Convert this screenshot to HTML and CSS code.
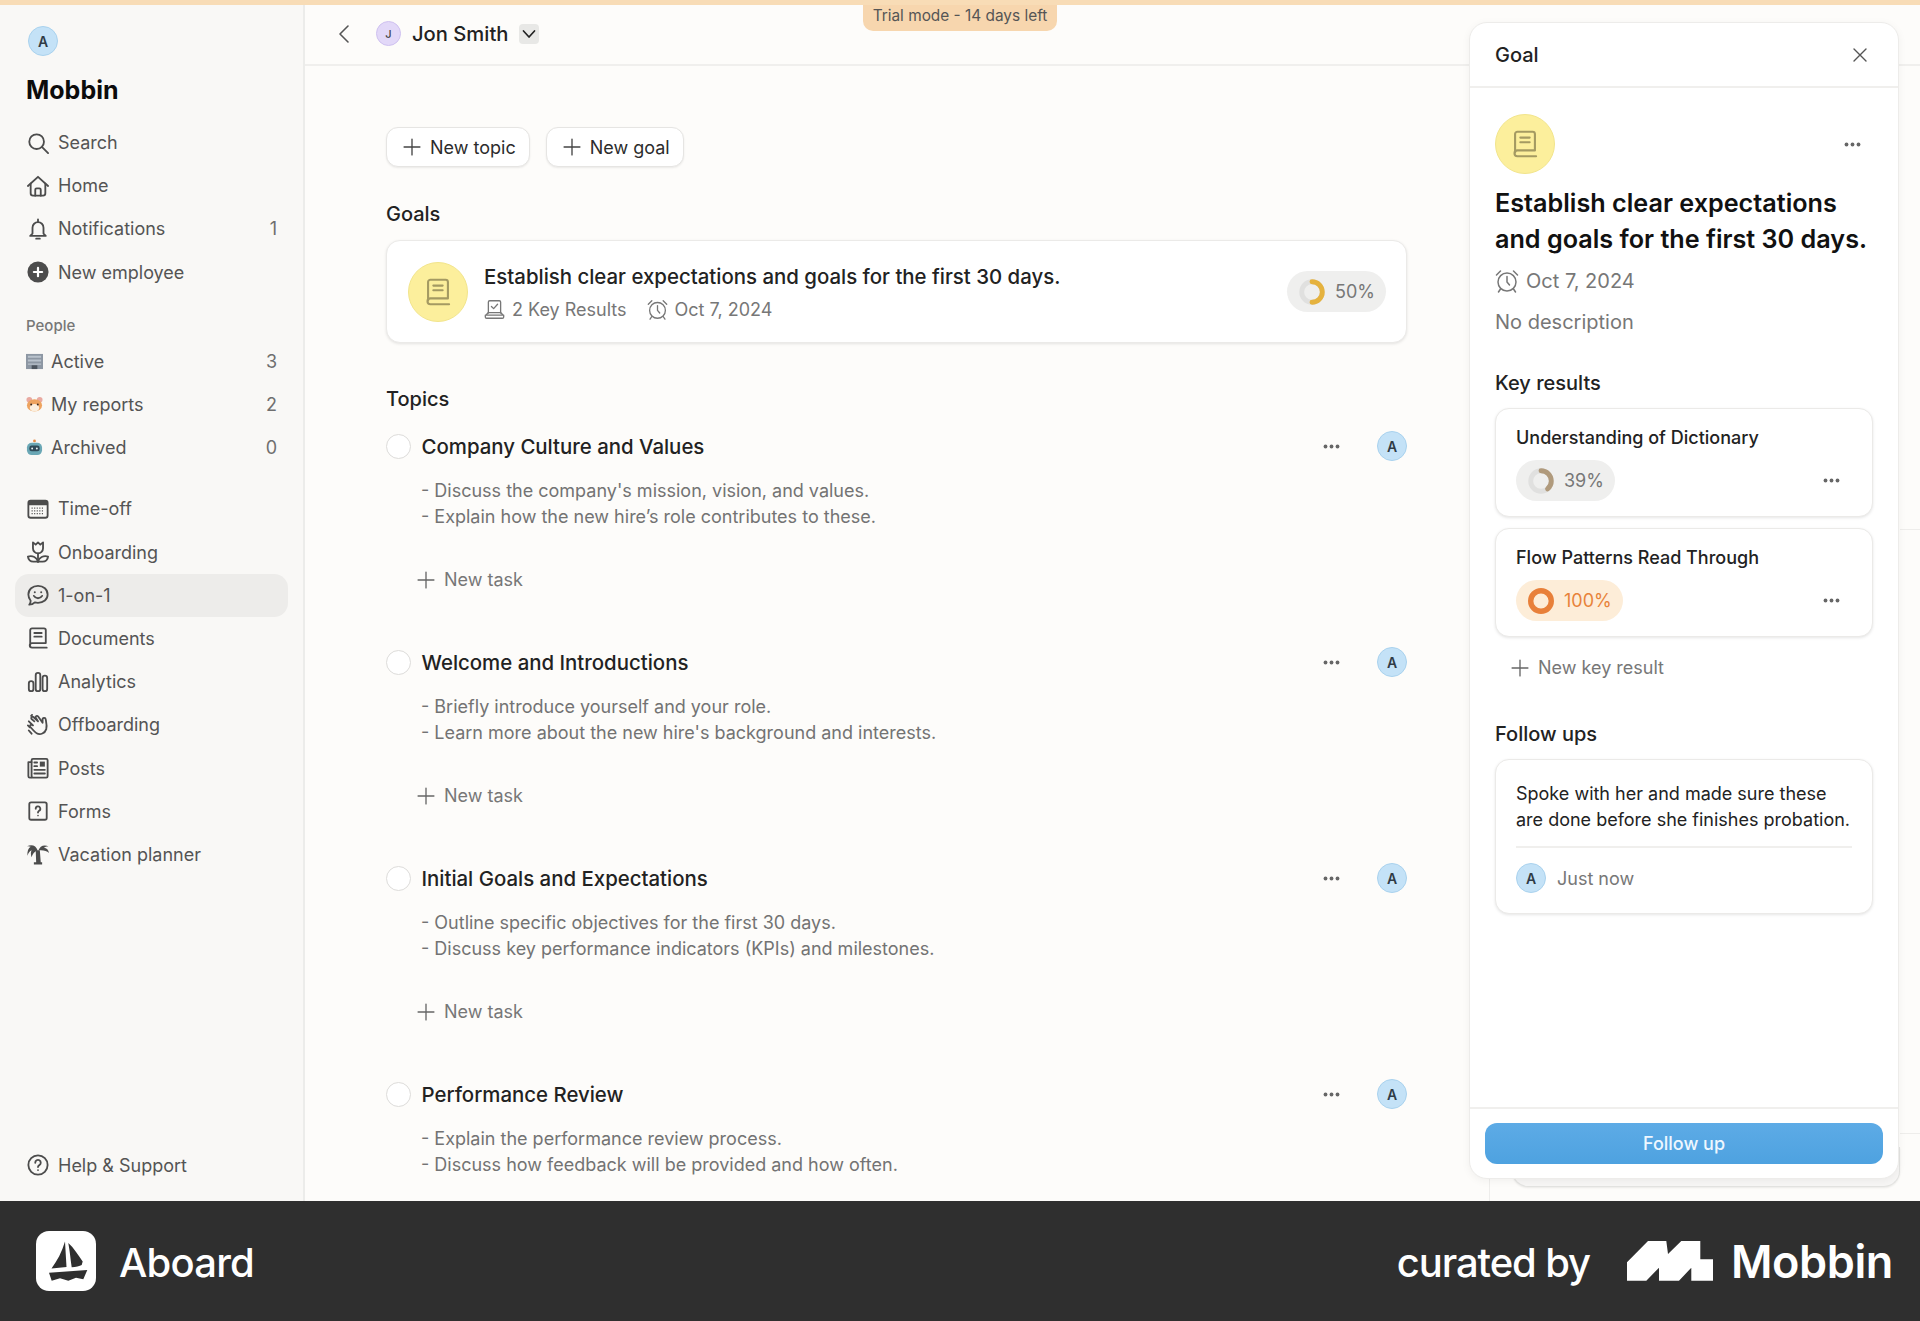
FILE: index.html
```html
<!DOCTYPE html>
<html lang="en">
<head>
<meta charset="utf-8">
<title>Aboard - 1-on-1</title>
<link rel="stylesheet" href="styles.css">
</head>
<body>
<svg class="sprites" xmlns="http://www.w3.org/2000/svg">
  <symbol id="i-search" viewBox="0 0 24 24"><circle cx="10.5" cy="10.5" r="8"/><path d="M16.5 16.5 23 23"/></symbol>
  <symbol id="i-home" viewBox="0 0 24 24"><path d="M1 12 12 2l11 10"/><path d="M4 9.5V20a2.5 2.5 0 0 0 2.5 2.5h11A2.5 2.5 0 0 0 20 20V9.5"/><path d="M9 22.5V16a1.5 1.5 0 0 1 1.5-1.5h3A1.5 1.5 0 0 1 15 16v6.5"/></symbol>
  <symbol id="i-bell" viewBox="0 0 24 24"><path d="M12 1.5V4"/><path d="M6 17v-6.5a6 6 0 0 1 12 0V17l2.5 2.5h-17z"/><path d="M10 22.5h4"/></symbol>
  <symbol id="i-add" viewBox="0 0 24 24"><circle class="fill" cx="12" cy="12" r="11.500"/><path class="inv" d="M12 7.5v9M7.5 12h9"/></symbol>
  <symbol id="i-cal" viewBox="0 0 24 24"><rect x="1.5" y="3" width="21" height="18.5" rx="2.5"/><path class="fill" d="M1.5 5.5A2.5 2.5 0 0 1 4 3h16a2.5 2.5 0 0 1 2.5 2.5V8h-21z"/><path class="thin" stroke-dasharray="1.2 1.6" d="M5 11h14M5 14h14M5 17h14"/></symbol>
  <symbol id="i-tulip" viewBox="0 0 24 24"><path d="M6.5 1.5l3 2.5L12 1.5 14.500 4l3-2.500V8a5.500 5.500 0 0 1-11 0z"/><path d="M12 13.500v9.500"/><path d="M12 22.500H7c-3.500 0-5.500-2-6-5.500 5-1.500 10 1 11 5.500zM12 22.500h5c3.500 0 5.500-2 6-5.500-5-1.500-10 1-11 5.500z"/></symbol>
  <symbol id="i-chat" viewBox="0 0 24 24"><path d="M12 2c6 0 10.500 4 10.500 9.500S18 20.500 12 20.500c-1.500 0-2.500-.2-3.500-.5-1.500 1.500-3.500 2.500-6 2.500 1-1 1.500-2.500 1.500-4.200C2.500 16.500 1.500 14.200 1.500 11.500 1.500 6 6 2 12 2z"/><circle class="fill" cx="8.500" cy="9" r="1.100"/><circle class="fill" cx="15.500" cy="9" r="1.100"/><path d="M7.500 13c1 1.800 2.500 2.500 4.500 2.500s3.500-.7 4.500-2.500"/></symbol>
  <symbol id="i-book" viewBox="0 0 24 24"><path d="M3.500 19.500V3.500a2 2 0 0 1 2-2h13a2 2 0 0 1 2 2V17.500h-15a2.500 2.500 0 0 0 0 5h16"/><path d="M8 6.500h8M8 10.500h8"/></symbol>
  <symbol id="i-bars" viewBox="0 0 24 24"><rect x="2" y="11" width="5" height="11" rx="2.500"/><rect x="9.500" y="2" width="5" height="20" rx="2.500"/><rect x="17" y="5" width="5" height="17" rx="2.500"/></symbol>
  <symbol id="i-wave" viewBox="0 0 24 24"><path d="M8 8 5 5.500a1.500 1.500 0 0 1 2-2.200l5 4.700-2.500-4a1.500 1.500 0 0 1 2.500-1.500l5 7V6a1.700 1.700 0 0 1 3.400-.2c.8 4 1.600 7 .6 10.700-1.400 4.500-6.500 6.800-10.500 4.500-1.500-.8-2.500-2-7-7a1.500 1.500 0 0 1 2.100-2.100"/><path d="M2 8 6.500 12.500M1 12.500l2 2M2 18l3 3.500M4.500 2l1-1"/></symbol>
  <symbol id="i-news" viewBox="0 0 24 24"><path d="M5 22.500H3a1.500 1.500 0 0 1-1.500-1.500V5.500H5"/><rect x="5" y="2" width="17.500" height="20.500" rx="1.500"/><rect class="fill" x="14" y="5" width="5.500" height="5.500"/><path d="M8 6h3M8 10h3M8 14h11.500M8 18h11.500"/></symbol>
  <symbol id="i-form" viewBox="0 0 24 24"><rect x="2.500" y="2.500" width="19" height="19" rx="2"/><path d="M9.500 9.500a2.500 2.500 0 1 1 3.700 2.200c-.8.500-1.200 1-1.200 2"/><circle class="fill" cx="12" cy="17" r=".9"/></symbol>
  <symbol id="i-palm" viewBox="0 0 24 24"><path class="solid" d="M11.500 8C10 3 5.500 1 0 3.500c1.800-.2 3 0 4 .6C1.500 5.500 0 9 .5 14c1-3 2.500-5 4.500-6-1 2-1 4.500 0 7.500C6 12 8 9.500 11.500 8zM12.500 8C14 3.500 18.500 1 24 4c-2.500-.2-4 .2-5.500 1.200C21.500 5.500 23.500 7.500 24 11c-2.500-2.500-6-3.500-11.500-3z"/><path class="solid" d="M9.500 8h4.500l1 13h1.500v2.500H7.500V21h2.500z"/></symbol>
  <symbol id="i-help" viewBox="0 0 24 24"><circle cx="12" cy="12" r="10.500"/><path d="M9 9.500a3 3 0 1 1 4.500 2.600c-1 .6-1.500 1.100-1.500 2.200"/><circle class="fill" cx="12" cy="17.500" r="1"/></symbol>
  <symbol id="i-alarm" viewBox="0 0 24 24"><circle cx="12" cy="13" r="9"/><path d="M12 7.500V13l2.500 3"/><path d="M1.500 6 5.500 2M22.500 6l-4-4M5.500 20 3.500 23M18.500 20l2 3"/></symbol>
  <symbol id="i-tray" viewBox="0 0 24 24"><path d="M5 16V3.500A1.500 1.500 0 0 1 6.500 2h11A1.500 1.500 0 0 1 19 3.500V16"/><path d="M8.500 8.500 11 11l4.500-5"/><path d="M5 15.500 1.500 19v1.500A1.500 1.500 0 0 0 3 22h18a1.500 1.500 0 0 0 1.500-1.500V19L19 15.500zM1.500 18.500h21"/></symbol>
  <symbol id="i-plus" viewBox="0 0 24 24"><path d="M12 2.500v19M2.500 12h19"/></symbol>
  <symbol id="i-dots" viewBox="0 0 17 5"><circle class="fill" cx="2.500" cy="2.500" r="1.900"/><circle class="fill" cx="8.500" cy="2.500" r="1.900"/><circle class="fill" cx="14.500" cy="2.500" r="1.900"/></symbol>
</svg>

<div class="strip"></div>
<div class="app">
  <aside class="sidebar">
    <div class="avatar avatar-blue side-avatar">A</div>
    <div class="workspace">Mobbin</div>
    <nav class="nav">
      <a class="nav-item"><svg class="ic"><use href="#i-search"/></svg>Search</a>
      <a class="nav-item"><svg class="ic"><use href="#i-home"/></svg>Home</a>
      <a class="nav-item"><svg class="ic"><use href="#i-bell"/></svg>Notifications<span class="count">1</span></a>
      <a class="nav-item"><svg class="ic"><use href="#i-add"/></svg>New employee</a>
    </nav>
    <div class="nav-label">People</div>
    <nav class="nav">
      <a class="nav-item nav-emoji">
        <svg class="emoji" viewBox="0 0 18 18"><rect y="1" width="18" height="16" fill="#8d97a3"/><path d="M2 3h14v2H2zM2 7h14v2H2zM2 11h14v1.500H2z" fill="#b9c2cc"/><rect x="6" y="13" width="6" height="4" fill="#4d555e"/></svg>Active<span class="count">3</span></a>
      <a class="nav-item nav-emoji">
        <svg class="emoji" viewBox="0 0 18 18"><circle cx="3.500" cy="4" r="3" fill="#e9a9a0"/><circle cx="14.500" cy="4" r="3" fill="#e9a9a0"/><ellipse cx="9" cy="10" rx="8" ry="6.500" fill="#eea35f"/><ellipse cx="9" cy="12.500" rx="5" ry="4" fill="#fbeedd"/><circle cx="5.500" cy="9" r="1" fill="#3a2b24"/><circle cx="12.500" cy="9" r="1" fill="#3a2b24"/></svg>My reports<span class="count">2</span></a>
      <a class="nav-item nav-emoji">
        <svg class="emoji" viewBox="0 0 18 18"><circle cx="9" cy="2" r="1.500" fill="#e88e4a"/><rect x="1" y="4" width="16" height="13" rx="5" fill="#6aa7b5"/><rect x="3.500" y="7" width="11" height="6" rx="2.500" fill="#2f4a58"/><circle cx="6.500" cy="10" r="1" fill="#e9f3f5"/><circle cx="11.500" cy="10" r="1" fill="#e9f3f5"/></svg>Archived<span class="count">0</span></a>
    </nav>
    <nav class="nav nav-tools">
      <a class="nav-item"><svg class="ic"><use href="#i-cal"/></svg>Time-off</a>
      <a class="nav-item"><svg class="ic"><use href="#i-tulip"/></svg>Onboarding</a>
      <a class="nav-item is-active"><svg class="ic"><use href="#i-chat"/></svg>1-on-1</a>
      <a class="nav-item"><svg class="ic"><use href="#i-book"/></svg>Documents</a>
      <a class="nav-item"><svg class="ic"><use href="#i-bars"/></svg>Analytics</a>
      <a class="nav-item"><svg class="ic"><use href="#i-wave"/></svg>Offboarding</a>
      <a class="nav-item"><svg class="ic"><use href="#i-news"/></svg>Posts</a>
      <a class="nav-item"><svg class="ic"><use href="#i-form"/></svg>Forms</a>
      <a class="nav-item"><svg class="ic"><use href="#i-palm"/></svg>Vacation planner</a>
    </nav>
    <a class="nav-item help"><svg class="ic"><use href="#i-help"/></svg>Help &amp; Support</a>
  </aside>

  <main class="main">
    <header class="topbar">
      <svg class="back" viewBox="0 0 12 20"><path d="M10 2 2 10l8 8"/></svg>
      <div class="avatar avatar-purple">J</div>
      <span class="person">Jon Smith</span>
      <span class="caret"><svg viewBox="0 0 14 10"><path d="M1.500 2 7 8l5.500-6"/></svg></span>
    </header>
    <div class="content">
      <div class="actions">
        <button class="btn"><svg class="ic-plus"><use href="#i-plus"/></svg>New topic</button>
        <button class="btn"><svg class="ic-plus"><use href="#i-plus"/></svg>New goal</button>
      </div>
      <h3 class="section goals-head">Goals</h3>
      <div class="goal-card">
        <div class="goal-icon"><svg class="book-ic"><use href="#i-book"/></svg></div>
        <div class="goal-body">
          <div class="goal-title">Establish clear expectations and goals for the first 30 days.</div>
          <div class="goal-meta">
            <span class="meta-item"><svg class="ic-meta"><use href="#i-tray"/></svg>2 Key Results</span>
            <span class="meta-item"><svg class="ic-meta"><use href="#i-alarm"/></svg>Oct 7, 2024</span>
          </div>
        </div>
        <span class="pill">
          <svg class="ring" viewBox="0 0 24 24"><circle class="track" cx="12" cy="12" r="9.500"/><circle class="arc arc-yellow" cx="12" cy="12" r="9.500" pathLength="100" stroke-dasharray="50 100"/></svg>50%
        </span>
      </div>
      <h3 class="section topics-head">Topics</h3>

      <section class="topic">
        <div class="topic-head"><span class="check"></span><span class="topic-title">Company Culture and Values</span><svg class="dots"><use href="#i-dots"/></svg><div class="avatar avatar-blue">A</div></div>
        <p class="topic-desc">- Discuss the company's mission, vision, and values.<br>- Explain how the new hire’s role contributes to these.</p>
        <div class="new-task"><svg class="ic-plus"><use href="#i-plus"/></svg>New task</div>
      </section>
      <section class="topic">
        <div class="topic-head"><span class="check"></span><span class="topic-title">Welcome and Introductions</span><svg class="dots"><use href="#i-dots"/></svg><div class="avatar avatar-blue">A</div></div>
        <p class="topic-desc">- Briefly introduce yourself and your role.<br>- Learn more about the new hire's background and interests.</p>
        <div class="new-task"><svg class="ic-plus"><use href="#i-plus"/></svg>New task</div>
      </section>
      <section class="topic">
        <div class="topic-head"><span class="check"></span><span class="topic-title">Initial Goals and Expectations</span><svg class="dots"><use href="#i-dots"/></svg><div class="avatar avatar-blue">A</div></div>
        <p class="topic-desc">- Outline specific objectives for the first 30 days.<br>- Discuss key performance indicators (KPIs) and milestones.</p>
        <div class="new-task"><svg class="ic-plus"><use href="#i-plus"/></svg>New task</div>
      </section>
      <section class="topic">
        <div class="topic-head"><span class="check"></span><span class="topic-title">Performance Review</span><svg class="dots"><use href="#i-dots"/></svg><div class="avatar avatar-blue">A</div></div>
        <p class="topic-desc">- Explain the performance review process.<br>- Discuss how feedback will be provided and how often.</p>
      </section>
    </div>
  </main>

  <div class="trial">Trial mode - 14 days left</div>

  <div class="under-panel">
    <div class="under-row under-row-1"></div>
    <div class="under-row under-row-2"></div>
    <div class="under-card"></div>
  </div>

  <aside class="panel">
    <div class="panel-head">
      <span>Goal</span>
      <svg class="close" viewBox="0 0 16 16"><path d="M2 2l12 12M14 2 2 14"/></svg>
    </div>
    <div class="panel-body">
      <div class="panel-top">
        <div class="goal-icon"><svg class="book-ic"><use href="#i-book"/></svg></div>
        <svg class="dots"><use href="#i-dots"/></svg>
      </div>
      <h2 class="panel-title">Establish clear expectations and goals for the first 30 days.</h2>
      <div class="panel-date"><svg class="ic-date"><use href="#i-alarm"/></svg>Oct 7, 2024</div>
      <div class="panel-desc">No description</div>
      <h3 class="section kr-head">Key results</h3>
      <div class="kr-card">
        <div class="kr-title">Understanding of Dictionary</div>
        <div class="kr-row">
          <span class="pill">
            <svg class="ring" viewBox="0 0 24 24"><circle class="track" cx="12" cy="12" r="9.500"/><circle class="arc arc-tan" cx="12" cy="12" r="9.500" pathLength="100" stroke-dasharray="39 100"/></svg>39%
          </span>
          <svg class="dots"><use href="#i-dots"/></svg>
        </div>
      </div>
      <div class="kr-card">
        <div class="kr-title">Flow Patterns Read Through</div>
        <div class="kr-row">
          <span class="pill pill-done">
            <svg class="ring" viewBox="0 0 24 24"><circle class="arc arc-orange" cx="12" cy="12" r="9.500"/></svg>100%
          </span>
          <svg class="dots"><use href="#i-dots"/></svg>
        </div>
      </div>
      <div class="new-kr"><svg class="ic-plus"><use href="#i-plus"/></svg>New key result</div>
      <h3 class="section fu-head">Follow ups</h3>
      <div class="fu-card">
        <p class="fu-text">Spoke with her and made sure these are done before she finishes probation.</p>
        <div class="fu-meta"><div class="avatar avatar-blue">A</div><span>Just now</span></div>
      </div>
    </div>
    <div class="panel-foot"><button class="primary">Follow up</button></div>
  </aside>
</div>

<footer class="brandbar">
  <div class="brand">
    <svg class="boat" viewBox="0 0 60 60"><rect width="60" height="60" rx="13" fill="#fff"/><path fill="#2f2f2f" d="M29 10.500C26 21 21 30 15.500 37.500L30.500 36zM32.300 12c1.500 8 2.200 16 3.400 24.300 4-.4 8-1 10-2.300l1-3.500C42 24 38 17 32.300 12zM13 41.700l38.300-2.700-4 9.300-7.300-1.600-7.700 3-8.300-2.400-8.300 2.400z"/></svg>
    <span>Aboard</span>
  </div>
  <div class="curated">
    <span class="curated-by">curated by</span>
    <svg class="mobbin-mark" viewBox="0 0 86 40"><path fill="#fff" d="M0 39.700V21.300L21 0h18.300L41 13 54.300 0h19v18.300H86v21.400H64.300V26.700L52 39.700H32V26.700L19.300 39.700z"/></svg>
    <span class="mobbin-word">Mobbin</span>
  </div>
</footer>
</body>
</html>
```

FILE: styles.css
```css
* { box-sizing: border-box; }
html, body { margin: 0; padding: 0; }
body {
  width: 1920px;
  height: 1321px;
  overflow: hidden;
  font-family: Inter, "Liberation Sans", sans-serif;
  color: #222;
  background: #fdfcfa;
  display: flex;
  flex-direction: column;
}
.sprites { display: none; }
svg { fill: none; stroke: currentColor; stroke-width: 1.7; stroke-linecap: round; stroke-linejoin: round; flex: none; }
symbol .fill { fill: currentColor; stroke: none; }
symbol .inv { stroke: #fff; stroke-width: 2.4; }
symbol .thin { stroke-width: 1.2; stroke-linecap: butt; }
symbol .solid { fill: currentColor; stroke: none; }

.strip { height: 5px; background: #f8dcb6; flex: none; }
.app { position: relative; flex: none; height: 1196px; display: flex; overflow: hidden; }

/* sidebar */
.sidebar {
  width: 305px;
  flex: none;
  background: #f9f8f6;
  border-right: 2px solid #ececea;
  display: flex;
  flex-direction: column;
  padding: 21px 15px 14px 15px;
}
.avatar {
  width: 30px; height: 30px; border-radius: 50%;
  display: flex; align-items: center; justify-content: center;
  font-size: 14px; font-weight: 600; flex: none;
}
.avatar-blue { background: #c4e2f7; border: 1px solid #a9d2ee; color: #2f3b46; }
.avatar-purple { width: 25px; height: 25px; font-size: 11px; font-weight: 500; background: #e2d8f8; border: 1px solid #cfc1f0; color: #444; }
.side-avatar { margin-left: 13px; }
.workspace { margin: 17px 0 0 11px; font-size: 25px; line-height: 34px; font-weight: 700; color: #0c0c0c; }
.nav { display: flex; flex-direction: column; }
.workspace + .nav { margin-top: 14px; }
.nav-item {
  height: 43.2px;
  display: flex; align-items: center;
  padding: 0 11px 0 12px;
  gap: 9px;
  font-size: 18px;
  color: #545454;
  border-radius: 14px;
}
.ic { width: 22px; height: 22px; color: #4c4c4c; stroke-width: 2; }
.is-active { background: #edecea; }
.nav-label { margin: 21px 0 0 11px; font-size: 15px; line-height: 22px; font-weight: 500; color: #777; }
.nav-label + .nav { margin-top: 3px; }
.nav-emoji { padding-left: 11px; gap: 8px; }
.emoji { width: 17px; height: 17px; stroke: none; }
.count { margin-left: auto; color: #6f6f6f; }
.nav-tools { margin-top: 18px; }
.help { margin-top: auto; }

/* main */
.main { flex: 1; min-width: 0; display: flex; flex-direction: column; }
.topbar {
  height: 61px;
  flex: none;
  display: flex; align-items: center;
  border-bottom: 2px solid #f0efed;
  padding: 0 0 2px 33px;
}
.back { width: 12px; height: 20px; color: #555; stroke-width: 1.6; }
.topbar .avatar { margin-left: 26px; }
.person { margin-left: 11px; font-size: 20.200px; font-weight: 500; color: #222; }
.caret { margin-left: 11px; width: 20px; height: 20px; border-radius: 4px; background: #e8e8e6; display: flex; align-items: center; justify-content: center; }
.caret svg { width: 14px; height: 10px; color: #222; }
.content { padding: 61px 0 0 81px; width: 1102px; }
.actions { display: flex; gap: 16px; }
.btn {
  height: 40px;
  display: flex; align-items: center; gap: 8px;
  padding: 0 13px 0 15px;
  border: 1px solid #e6e5e3;
  border-radius: 12px;
  background: #fff;
  box-shadow: 0 1px 2px rgba(0,0,0,.08);
  font: 400 18px Inter, "Liberation Sans", sans-serif;
  color: #2c2c2c;
}
.ic-plus { width: 20px; height: 20px; color: #444; stroke-width: 1.6; }
.section { margin: 0; font-size: 20px; line-height: 28px; font-weight: 500; color: #222; }
.goals-head { margin-top: 33px; }
.goal-card {
  margin-top: 12px;
  height: 103px;
  display: flex; align-items: center;
  padding: 0 20px 0 21px;
  background: #fff;
  border: 1px solid #ebeae8;
  border-radius: 14px;
  box-shadow: 0 1px 3px rgba(0,0,0,.1);
}
.goal-icon { width: 60px; height: 60px; border-radius: 50%; background: #fcef9c; border: 1px solid #f2e58c; display: flex; align-items: center; justify-content: center; flex: none; }
.book-ic { width: 28px; height: 28px; color: #a49a62; stroke-width: 1.8; }
.goal-body { margin-left: 16px; flex: 1; padding-top: 2px; }
.goal-title { font-size: 20.400px; line-height: 28px; font-weight: 500; color: #222; }
.goal-meta { margin-top: 6px; display: flex; gap: 20px; font-size: 18px; color: #777; }
.meta-item { display: flex; align-items: center; gap: 7px; line-height: 26px; }
.ic-meta { width: 21px; height: 21px; color: #777; stroke-width: 1.5; }
.pill {
  display: inline-flex; align-items: center; gap: 10px;
  height: 41px;
  padding: 0 11px 0 12px;
  border-radius: 21px;
  background: #efefee;
  font-size: 18px;
  color: #777;
}
.pill-done { background: #fdedd8; color: #e8833a; }
.ring { width: 26px; height: 26px; transform: rotate(-90deg); }
.track { stroke: #e0e0df; stroke-width: 4.500; }
.arc { stroke-width: 4.500; }
.arc-yellow { stroke: #e5b23e; }
.arc-tan { stroke: #b09a7c; }
.arc-orange { stroke: #e8803a; stroke-width: 5; }
.topics-head { margin-top: 42px; }
.topic { height: 216px; }
.topics-head + .topic { margin-top: 18px; }
.topic-head { height: 30px; display: flex; align-items: center; }
.check { width: 25px; height: 25px; border-radius: 50%; border: 1.5px solid #dddcda; background: #fff; flex: none; }
.topic-title { margin-left: 10.500px; flex: 1; font-size: 20.400px; font-weight: 500; color: #222; }
.dots { width: 17px; height: 5px; color: #666; }
.topic-head .avatar { margin-left: 37px; }
.topic-desc { margin: 17px 0 0 35px; font-size: 18px; line-height: 25.500px; color: #737373; }
.new-task { margin: 38px 0 0 30px; display: flex; align-items: center; gap: 8px; font-size: 18px; line-height: 26px; color: #777; }
.new-task .ic-plus, .new-kr .ic-plus { color: #666; }

/* trial badge */
.trial {
  position: absolute; left: 863px; top: 0;
  width: 194px; height: 26px;
  background: #f7d6ae;
  border-radius: 0 0 10px 10px;
  font-size: 15.400px; line-height: 22px;
  text-align: center;
  color: #555;
}

/* layer under the panel */
.under-panel { position: absolute; left: 1489px; right: 0; top: 60px; bottom: 0; border-left: 1px solid #eeedeb; background: transparent; }
.under-row { position: absolute; left: 410px; right: 0; height: 1px; background: #eeedeb; }
.under-row-1 { top: 464px; }
.under-row-2 { top: 1068px; }
.under-card { position: absolute; left: 22px; right: 20px; bottom: 14px; height: 40px; border-radius: 0 0 16px 16px; background: #f7f6f5; border: 1px solid #e3e3e1; border-top: none; box-shadow: 0 1px 2px rgba(0,0,0,.08); }

/* panel */
.panel {
  position: absolute; left: 1469px; top: 17px;
  width: 430px; height: 1157px;
  background: #fff;
  border: 1px solid #edecea;
  border-radius: 18px;
  box-shadow: 0 2px 8px rgba(0,0,0,.05);
  display: flex; flex-direction: column;
}
.panel-head {
  height: 65px; flex: none;
  display: flex; align-items: center; justify-content: space-between;
  padding: 0 30px 0 25px;
  border-bottom: 2px solid #f0efed;
  font-size: 20px; font-weight: 500; color: #222;
}
.close { width: 16px; height: 16px; color: #555; stroke-width: 1.4; }
.panel-body { flex: 1; padding: 26px 25px 0; }
.panel-top { display: flex; align-items: center; justify-content: space-between; padding-right: 12px; }
.panel-title { margin: 11px 0 0; font-size: 25.200px; line-height: 36px; font-weight: 600; color: #111; }
.panel-date { margin-top: 9px; display: flex; align-items: center; gap: 7px; font-size: 20px; line-height: 30px; color: #777; }
.ic-date { width: 24px; height: 24px; color: #777; stroke-width: 1.5; }
.panel-desc { margin-top: 11px; font-size: 20px; line-height: 30px; color: #777; }
.kr-head { margin-top: 32px; }
.kr-card {
  margin-top: 11px;
  height: 109px;
  padding: 17px 20px;
  border: 1px solid #ebeae8;
  border-radius: 14px;
  background: #fff;
  box-shadow: 0 1px 3px rgba(0,0,0,.1);
}
.kr-title { font-size: 18px; line-height: 24px; font-weight: 500; color: #222; }
.kr-row { margin-top: 10px; display: flex; align-items: center; justify-content: space-between; padding-right: 12px; }
.new-kr { margin: 18px 0 0 15px; display: flex; align-items: center; gap: 8px; font-size: 18px; line-height: 26px; color: #777; }
.fu-head { margin-top: 39px; }
.fu-card {
  margin-top: 11px;
  height: 155px;
  padding: 0 20px;
  border: 1px solid #ebeae8;
  border-radius: 14px;
  background: #fff;
  box-shadow: 0 1px 3px rgba(0,0,0,.1);
}
.fu-text { margin: 21px 0 0; padding-bottom: 14px; font-size: 18px; line-height: 25.500px; color: #222; border-bottom: 2px solid #f0efed; }
.fu-meta { margin-top: 15px; display: flex; align-items: center; gap: 11px; font-size: 18px; color: #777; }
.panel-foot { height: 71px; flex: none; border-top: 2px solid #f0efed; padding: 14px 15px 0; }
.primary {
  width: 100%; height: 41px;
  border: 0; border-radius: 12px;
  background: linear-gradient(#5dabe6, #4ea2e0);
  font: 500 18px Inter, "Liberation Sans", sans-serif;
  color: #eef7ff;
}

/* brand bar */
.brandbar {
  flex: 1;
  background: #2f2f2f;
  display: flex; align-items: center; justify-content: space-between;
  padding: 0 27px 0 36px;
  color: #fff;
}
.brand { display: flex; align-items: center; gap: 23px; font-size: 40px; line-height: 60px; font-weight: 500; letter-spacing: -.8px; }
.brand span { padding-top: 4px; }
.boat { width: 60px; height: 60px; stroke: none; }
.curated { display: flex; align-items: center; }
.curated-by { font-size: 40px; font-weight: 500; letter-spacing: -1.100px; margin-right: 37px; padding-top: 2px; }
.mobbin-mark { width: 86px; height: 40px; stroke: none; margin-right: 18px; }
.mobbin-word { font-size: 45px; font-weight: 600; letter-spacing: -.4px; }
```
